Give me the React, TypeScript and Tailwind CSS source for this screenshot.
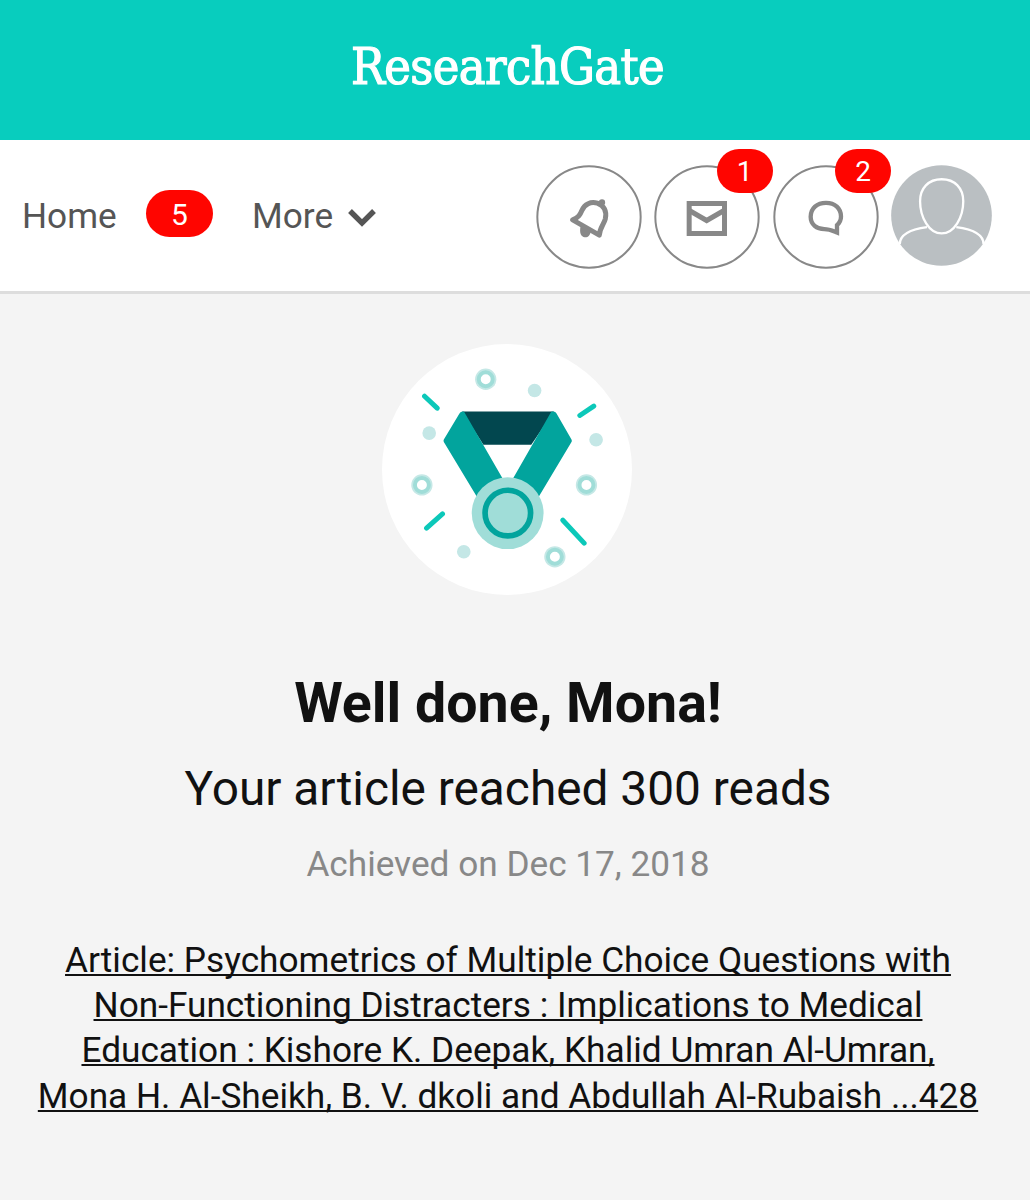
import type { ReactNode } from 'react';

const articleLines = [
  'Article: Psychometrics of Multiple Choice Questions with',
  'Non-Functioning Distracters : Implications to Medical',
  'Education : Kishore K. Deepak, Khalid Umran Al-Umran,',
  'Mona H. Al-Sheikh, B. V. dkoli and Abdullah Al-Rubaish ...428',
];

function IconButton({ label, count, children }: { label: string; count?: number; children: ReactNode }) {
  return (
    <button aria-label={label} className="relative h-[104px] w-[106px] shrink-0">
      {children}
      {count !== undefined && (
        <span className="absolute -top-[16.5px] left-[62.5px] flex h-[44px] w-[56px] items-center justify-center rounded-full bg-[#ff0500] pt-[3px] text-[28px] leading-none text-white">
          {count}
        </span>
      )}
    </button>
  );
}

function BellIcon() {
  return (
    <svg viewBox="18 75 318 311" className="size-full" fill="none" stroke="#888888">
      <ellipse cx="177" cy="230.5" rx="155" ry="152" strokeWidth="6" />
      <path
        d="M128 239C146 232 150 224 156 210C164 192 182 183 202 189C222 196 231 213 226 236C222 252 209 263 208 285Z"
        strokeWidth="15"
        strokeLinejoin="round"
      />
      <circle cx="216" cy="187" r="9.5" fill="#888888" stroke="none" />
      <path d="M152 256L183 270C181 287 173 292 164 291C154 290 147 281 152 256Z" fill="#888888" stroke="none" />
    </svg>
  );
}

function MailIcon() {
  return (
    <svg viewBox="374 75 318 311" className="size-full" fill="none" stroke="#888888">
      <ellipse cx="533" cy="230.5" rx="155" ry="152" strokeWidth="6" />
      <rect x="479.5" y="190" width="106" height="90" strokeWidth="15" />
      <path d="M480 211L532 241L584 211" strokeWidth="15" />
    </svg>
  );
}

function ChatIcon() {
  return (
    <svg viewBox="39 75 318 311" className="size-full" fill="none" stroke="#888888">
      <ellipse cx="198" cy="230.5" rx="155" ry="152" strokeWidth="6" />
      <path
        d="M198 188C171 188 152 205 152 230C152 253 170 267 193 267C208 267 218 272 231 277V255C239 248 243 240 243 229C243 205 225 188 198 188Z"
        strokeWidth="13"
      />
    </svg>
  );
}

function Avatar() {
  return (
    <svg viewBox="394 75 303 304" className="h-[101px] w-[101px] shrink-0" fill="none">
      <circle cx="545.5" cy="227" r="151.5" fill="#babfc2" />
      <g stroke="#ffffff" strokeWidth="7">
        <path d="M546 118C506 118 481 145 481 184C481 232 508 281 546 281C584 281 611 232 611 184C611 145 586 118 546 118Z" />
        <path d="M502 262C464 267 420 280 420 313" />
        <path d="M590 262C628 267 672 280 672 313" />
      </g>
    </svg>
  );
}

function Medal() {
  const rings = [[333, 118], [141, 436], [636, 436], [541, 652]];
  const dots = [[480, 152], [163, 280], [665, 300], [267, 637]];

  return (
    <svg viewBox="21 12 752 755" className="-ml-[2px] h-[251px] w-[250px]">
      <ellipse cx="397" cy="389.5" rx="376" ry="377.5" fill="#ffffff" />
      {rings.map(([x, y]) => (
        <g key={`${x}-${y}`}>
          <circle cx={x} cy={y} r="32" fill="#c5e8e6" />
          <circle cx={x} cy={y} r="21" fill="#ffffff" stroke="#a0ddd8" strokeWidth="12" />
        </g>
      ))}
      {dots.map(([x, y]) => (
        <circle key={`${x}-${y}`} cx={x} cy={y} r="20.5" fill="#c4e7e6" />
      ))}
      <path
        d="M149 169L187 205M658 199L616 227M203 523L155 566M565 542L629 611"
        stroke="#0cc8b9"
        strokeWidth="15"
        strokeLinecap="round"
      />
      <path d="M262 215H538L470 315H326Z" fill="#02474f" />
      <path d="M268 216L402 448L325 502L207 307Q205 303 207 299L254 221Q257 215 264 215Z" fill="#02a49d" />
      <path d="M530 216L397 448L474 502L591 307Q593 303 591 299L546 221Q543 215 536 215Z" fill="#02a49d" />
      <circle cx="399" cy="521" r="108" fill="#a0ddd8" />
      <circle cx="399.5" cy="520.5" r="68.5" fill="none" stroke="#02a49d" strokeWidth="17" />
    </svg>
  );
}

function App() {
  return (
    <div className="min-h-[1200px] bg-[#f4f4f4] font-['Roboto',sans-serif] text-[#111111]">
      <header className="flex h-[140px] items-center justify-center bg-[#08cdbe] pr-[15px]">
        <div className="-mt-1.5 font-['DejaVu_Serif_Condensed','DejaVu_Serif',serif] text-[50px] leading-none tracking-[-0.6px] text-white [-webkit-text-stroke:1.2px_white]">
          ResearchGate
        </div>
      </header>

      <nav className="flex h-[154px] items-start justify-between border-b-[3px] border-[#dddddd] bg-white pr-[38px] pl-[22px] text-[#555555]">
        <div className="flex h-[152px] items-center text-[35.2px]">
          <a className="w-[124px] pt-px">Home</a>
          <span className="-mt-[5px] flex h-[47px] w-[67px] items-center justify-center rounded-full bg-[#ff0500] pt-[3px] text-[30px] leading-none text-white">
            5
          </span>
          <a className="ml-[39px] pt-px">More</a>
          <svg viewBox="0 0 28 18" className="mt-1 ml-[15px] h-[18px] w-[28px]" fill="none" stroke="#555555" strokeWidth="5.4">
            <path d="M2 2L14 14L26 2" />
          </svg>
        </div>
        <div className="flex items-start gap-[12.5px] pt-[25px]">
          <IconButton label="Notifications">
            <BellIcon />
          </IconButton>
          <IconButton label="Messages" count={1}>
            <MailIcon />
          </IconButton>
          <IconButton label="Chat" count={2}>
            <ChatIcon />
          </IconButton>
          <Avatar />
        </div>
      </nav>

      <main className="flex flex-col items-center pt-[50px] pr-[14px] text-center whitespace-nowrap">
        <Medal />
        <h1 className="mt-[76px] text-[55.5px] leading-[66px] font-bold">Well done, Mona!</h1>
        <h2 className="mt-[22px] text-[47.8px] leading-[60px]">Your article reached 300 reads</h2>
        <p className="mt-[24px] text-[35.2px] leading-[42px] text-[#888888]">Achieved on Dec 17, 2018</p>
        <a className="mt-[52.5px] text-[35.23px] leading-[45.4px] underline decoration-2 underline-offset-[2px] [text-decoration-skip-ink:none]">
          {articleLines.map((line) => (
            <span key={line} className="block">
              {line}
            </span>
          ))}
        </a>
      </main>
    </div>
  );
}

export default App;
